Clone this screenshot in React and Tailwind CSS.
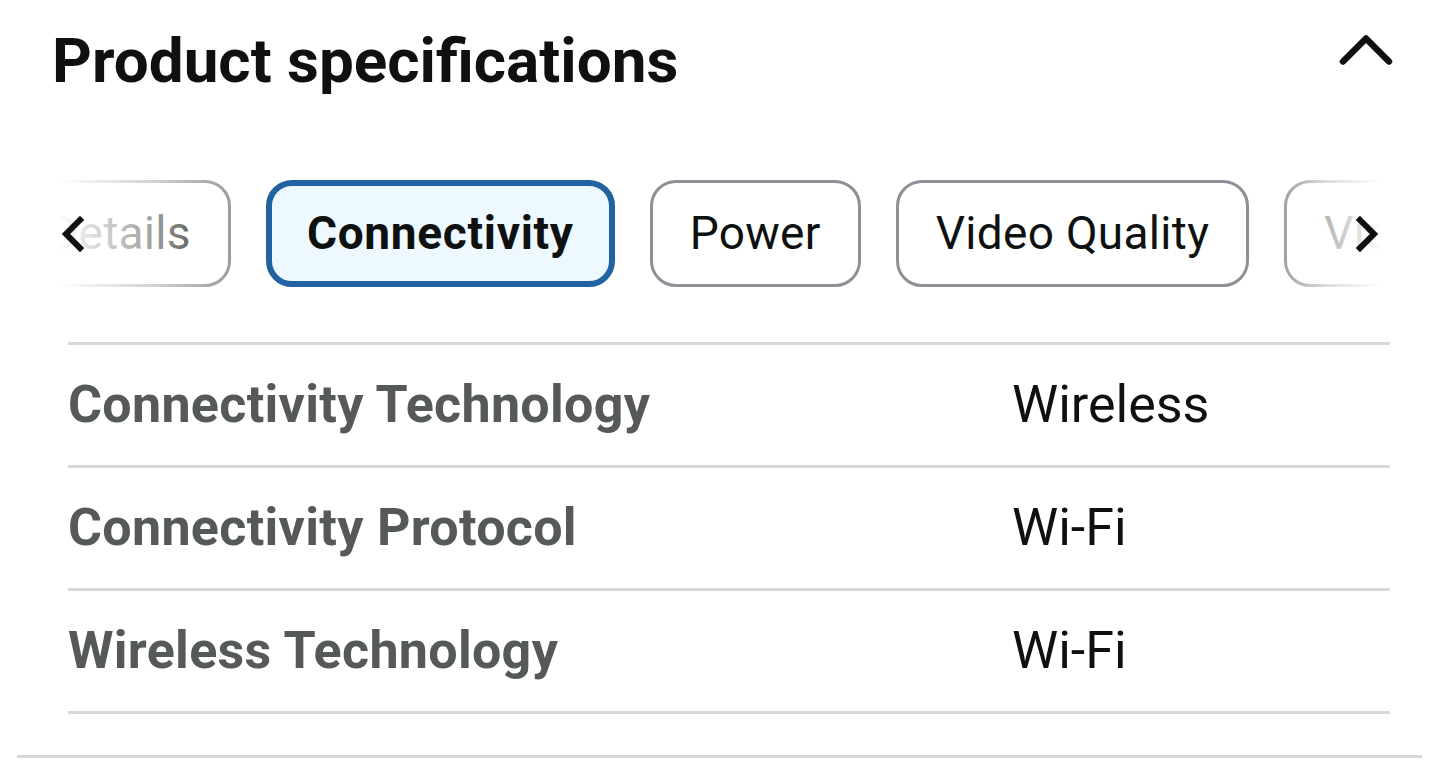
import { ChevronUp } from "lucide-react"

const tabs = [
  { name: "Details" },
  { name: "Connectivity", active: true },
  { name: "Power" },
  { name: "Video Quality" },
  { name: "Video" },
]

const specs = [
  { label: "Connectivity Technology", value: "Wireless" },
  { label: "Connectivity Protocol", value: "Wi-Fi" },
  { label: "Wireless Technology", value: "Wi-Fi" },
]

function Arrow({ dir }) {
  return (
    <svg width="28" height="40" viewBox="0 0 28 40" className="shrink-0">
      <polyline
        points={dir === "left" ? "22,6 8,20 22,34" : "6,6 20,20 6,34"}
        fill="none"
        stroke="#0f1111"
        strokeWidth="6"
        strokeLinecap="square"
      />
    </svg>
  )
}

export default function App() {
  return (
    <main className="w-[1440px] h-[767px] overflow-hidden bg-white text-[#0f1111] font-['Roboto',sans-serif]">
      <header className="flex items-center justify-between h-[120px] pl-[52px] pr-[28px]">
        <h2 className="text-[62px] font-bold">Product specifications</h2>
        <ChevronUp size={92} strokeWidth={1.7} className="mt-[-20px]" />
      </header>

      <div className="relative mt-[60px] mx-[58px] h-[107px] overflow-hidden">
        <div className="flex gap-[35px] ml-[-50px]">
          {tabs.map((tab) => (
            <div
              key={tab.name}
              className={
                tab.active
                  ? "shrink-0 h-[107px] px-[35px] flex items-center rounded-[26px] border-[6px] border-[#2162a1] bg-[#edf8ff] text-[46px] font-bold tracking-[0.7px]"
                  : "shrink-0 h-[107px] px-[37px] flex items-center rounded-[26px] border-[3px] border-[#8d9096] bg-white text-[46px] tracking-[0.3px]"
              }
            >
              {tab.name}
            </div>
          ))}
        </div>
        <div className="absolute inset-y-0 left-0 w-[190px] bg-gradient-to-r from-white via-white/60 to-transparent" />
        <div className="absolute inset-y-0 right-0 w-[110px] bg-gradient-to-l from-white via-white/70 to-transparent" />
        <div className="absolute inset-y-0 left-0 flex items-center">
          <Arrow dir="left" />
        </div>
        <div className="absolute inset-y-0 right-0 flex items-center">
          <Arrow dir="right" />
        </div>
      </div>

      <section className="mt-[55px] ml-[68px] mr-[50px] border-t-[3px] border-[#d5d9d9]">
        {specs.map((row) => (
          <div key={row.label} className="flex items-center h-[123px] border-b-[3px] border-[#d5d9d9] text-[52px]">
            <div className="w-[944px] font-bold text-[#565959] tracking-[0.3px]">{row.label}</div>
            <div>{row.value}</div>
          </div>
        ))}
      </section>

      <div className="mt-[41px] mx-[17px] mr-[18px] border-t-[3px] border-[#d5d9d9]" />
    </main>
  )
}
